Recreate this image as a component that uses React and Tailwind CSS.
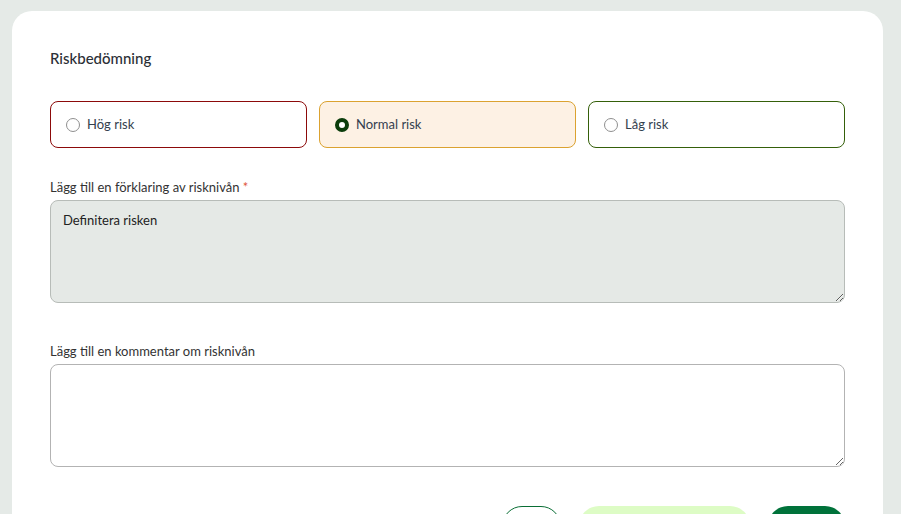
import React, { useState } from 'react';

const options = [
  { id: 'hog', label: 'Hög risk', border: 'border-[#8c0a0a]', bg: 'bg-white' },
  { id: 'normal', label: 'Normal risk', border: 'border-[#dba230]', bg: 'bg-[#fdf1e4]' },
  { id: 'lag', label: 'Låg risk', border: 'border-[#35600a]', bg: 'bg-white' },
];

const RiskOption = ({ option, checked, onSelect }) => (
  <label
    className={`flex-1 flex items-center gap-[7px] h-[47px] px-[15px] rounded-[8px] border cursor-pointer ${option.border} ${option.bg}`}
    onClick={() => onSelect(option.id)}
  >
    {checked ? (
      <span className="w-[14px] h-[14px] rounded-full border-[4px] border-[#0b3d0b] bg-white shrink-0" />
    ) : (
      <span className="w-[14px] h-[14px] rounded-full border border-[#8f8f8f] bg-white shrink-0" />
    )}
    <span className="text-[13px] text-[#34404e]">{option.label}</span>
  </label>
);

export default function App() {
  const [risk, setRisk] = useState('normal');

  return (
    <div
      className="h-[514px] bg-[#e5eae7] pl-[12px] pr-[18px] pt-[11px] overflow-hidden"
      style={{ fontFamily: 'Lato, "Noto Sans", sans-serif' }}
    >
      <div className="bg-white rounded-t-[20px] px-[38px] pt-[37px] pb-[20px]">
        {/* Title */}
        <h2 className="text-[15px] leading-[20px] font-medium text-[#2b2f36]">Riskbedömning</h2>

        {/* Risk options */}
        <div className="flex gap-[12px] mt-[33px]">
          {options.map((o) => (
            <RiskOption key={o.id} option={o} checked={risk === o.id} onSelect={setRisk} />
          ))}
        </div>

        {/* Explanation */}
        <div className="mt-[30px]">
          <p className="text-[13px] leading-[18px] text-[#333]">
            Lägg till en förklaring av risknivån <span className="text-[#e0553a]">*</span>
          </p>
          <textarea
            className="mt-[4px] block w-full h-[103px] rounded-[8px] border border-[#b7bcb8] bg-[#e5e9e6] px-[12px] py-[10px] text-[13px] text-[#222] outline-none"
            defaultValue="Definitera risken"
            spellCheck
          />
        </div>

        {/* Comment */}
        <div className="mt-[39px]">
          <p className="text-[13px] leading-[18px] text-[#333]">Lägg till en kommentar om risknivån</p>
          <textarea
            className="mt-[4px] block w-full h-[103px] rounded-[8px] border border-[#b3b3b3] bg-white px-[12px] py-[10px] text-[13px] outline-none"
          />
        </div>

        {/* Actions */}
        <div className="flex justify-end gap-[18px] mt-[39px]">
          <button aria-label="Tillbaka" className="w-[59px] h-[40px] rounded-full border border-[#0a6e35] bg-white" />
          <button aria-label="Spara utkast" className="w-[171px] h-[40px] rounded-full bg-[#ddfcc5]" />
          <button aria-label="Nästa" className="w-[77px] h-[40px] rounded-full bg-[#00723a]" />
        </div>
      </div>
    </div>
  );
}
